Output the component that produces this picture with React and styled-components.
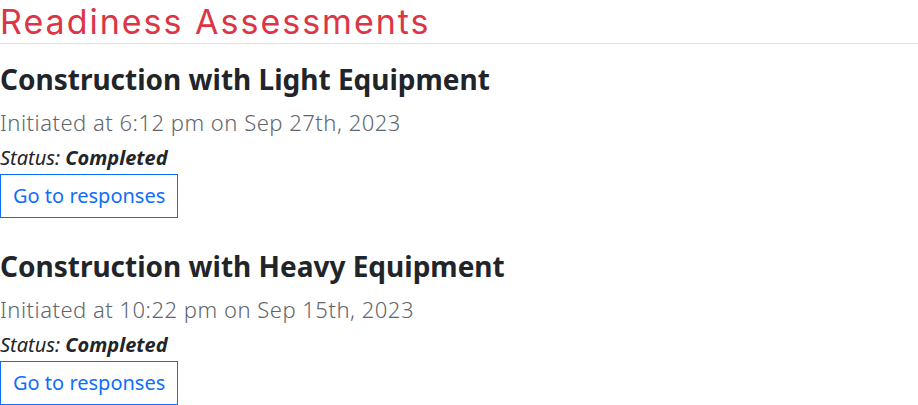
import React from 'react'
import styled, { createGlobalStyle } from 'styled-components'

const GlobalStyle = createGlobalStyle`
  body {
    margin: 0;
    background: #fff;
    font-family: 'Noto Sans', 'Open Sans', sans-serif;
    color: #212529;
  }
`

const Page = styled.main`
  display: flex;
  flex-direction: column;
`

const Heading = styled.h1`
  margin: 0;
  padding-top: 1px;
  font-family: 'Inter', 'Lato', sans-serif;
  font-weight: 400;
  font-size: 34px;
  line-height: 42px;
  letter-spacing: 2px;
  color: #dc3545;
  border-bottom: 1px solid #dee2e6;
`

const List = styled.div`
  display: flex;
  flex-direction: column;
  gap: 28px;
  padding-top: 15px;
`

const Item = styled.section`
  display: flex;
  flex-direction: column;
  align-items: flex-start;
`

const Title = styled.h3`
  margin: 0 0 8px;
  font-size: 28px;
  font-weight: 700;
  line-height: 40px;
`

const Initiated = styled.p`
  margin: 0 0 6px;
  font-size: 22px;
  font-weight: 300;
  line-height: 30px;
  letter-spacing: 0.5px;
  color: #5f666d;
`

const Status = styled.p`
  margin: 0 0 1px;
  font-size: 20px;
  font-style: italic;
  line-height: 30px;

  strong {
    font-weight: 700;
  }
`

const Button = styled.a`
  display: inline-block;
  padding: 6px 12px;
  font-size: 20px;
  line-height: 30px;
  color: #0d6efd;
  border: 1px solid #0d6efd;
  text-decoration: none;
  cursor: pointer;
`

const assessments = [
  { title: 'Construction with Light Equipment', time: '6:12 pm', date: 'Sep 27th, 2023', status: 'Completed' },
  { title: 'Construction with Heavy Equipment', time: '10:22 pm', date: 'Sep 15th, 2023', status: 'Completed' },
]

const App = () => (
  <Page>
    <GlobalStyle />
    <Heading>Readiness Assessments</Heading>
    <List>
      {assessments.map((a) => (
        <Item key={a.title}>
          <Title>{a.title}</Title>
          <Initiated>Initiated at {a.time} on {a.date}</Initiated>
          <Status>Status: <strong>{a.status}</strong></Status>
          <Button>Go to responses</Button>
        </Item>
      ))}
    </List>
  </Page>
)

export default App
